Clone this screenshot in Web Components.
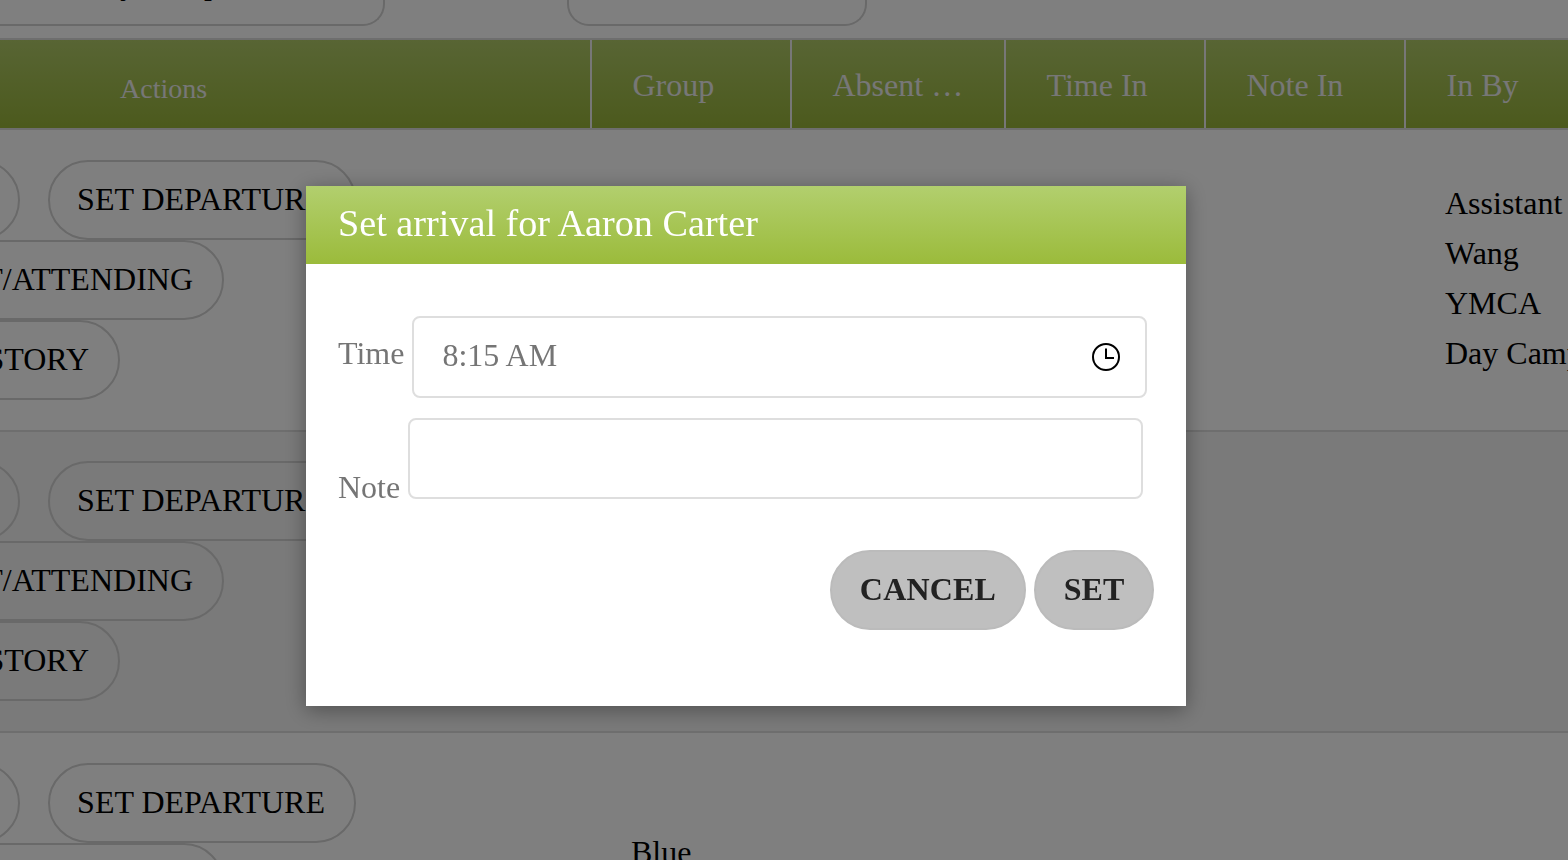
<!DOCTYPE html>
<html>
<head>
<meta charset="utf-8">
<title>Attendance</title>
<style>
html, body { margin: 0; height: 100%; overflow: hidden; background: #fff; }
body { font: 32px "Liberation Serif", "Times New Roman", serif; color: #000; }
</style>
</head>
<body>
<attendance-page></attendance-page>

<script>
const pillTemplate = document.createElement('template');
pillTemplate.innerHTML = `
<style>
:host {
  display: flex;
  justify-content: flex-end;
  align-items: center;
  box-sizing: border-box;
  height: 80px;
  padding: 0 29px 2px 0;
  border: 2px solid #d2d2d2;
  border-radius: 40px;
  white-space: nowrap;
  overflow: hidden;
}
</style>
<slot></slot>
`;
class PillButton extends HTMLElement {
  constructor() {
    super();
    this.attachShadow({ mode: 'open' }).appendChild(pillTemplate.content.cloneNode(true));
  }
}
customElements.define('pill-button', PillButton);

const headTemplate = document.createElement('template');
headTemplate.innerHTML = `
<style>
:host {
  display: grid;
  grid-template-columns: 870px 198px 212px 198px 198px 1fr;
  column-gap: 2px;
  box-sizing: border-box;
  height: 92px;
  border-top: 2px solid #dcdcdc;
  border-bottom: 2px solid #dcdcdc;
  background: linear-gradient(#b0ca68, #98b43a);
  color: #eeeeee;
}
.cell {
  box-shadow: 2px 0 0 #efefef;
  padding: 27px 0 0 40.5px;
  line-height: 36px;
  white-space: nowrap;
}
.actions {
  font-size: 28px;
  padding: 31px 0 0 400px;
}
</style>
<div class="cell actions">Actions</div>
<div class="cell">Group</div>
<div class="cell">Absent …</div>
<div class="cell">Time In</div>
<div class="cell">Note In</div>
<div class="cell">In By</div>
`;
class TableHead extends HTMLElement {
  constructor() {
    super();
    this.attachShadow({ mode: 'open' }).appendChild(headTemplate.content.cloneNode(true));
  }
}
customElements.define('table-head', TableHead);

const rowTemplate = document.createElement('template');
rowTemplate.innerHTML = `
<style>
:host {
  display: grid;
  grid-template-columns: 872px 200px 214px 200px 200px 1fr;
  box-sizing: border-box;
  height: 301.5px;
  border-bottom: 2px solid #dcdcdc;
}
:host([alt]) { background: #f4f4f4; }
.actions {
  display: flex;
  flex-direction: column;
  padding-top: 30px;
}
:host([alt]) .actions { padding-top: 29.5px; }
.group { padding: 94px 0 0 39px; line-height: 50px; }
.inby { padding: 48px 0 0 39px; line-height: 50px; white-space: nowrap; }
.spacer { grid-column: span 3; }
</style>
<div class="actions"><slot name="actions"></slot></div>
<div class="group"><slot name="group"></slot></div>
<div class="spacer"></div>
<div class="inby"><slot name="inby"></slot></div>
`;
class TableRow extends HTMLElement {
  constructor() {
    super();
    this.attachShadow({ mode: 'open' }).appendChild(rowTemplate.content.cloneNode(true));
  }
}
customElements.define('table-row', TableRow);

const actionsTemplate = document.createElement('template');
actionsTemplate.innerHTML = `
<style>
:host { display: block; }
.line { display: flex; gap: 28px; }
.arrive { width: 300px; }
.depart { width: 308px; }
.absent { width: 504px; }
.history { width: 400px; }
</style>
<div class="line">
  <pill-button class="arrive">SET ARRIVAL</pill-button>
  <pill-button class="depart">SET DEPARTURE</pill-button>
</div>
<div class="line"><pill-button class="absent">SET ABSENT/ATTENDING</pill-button></div>
<div class="line"><pill-button class="history">VIEW HISTORY</pill-button></div>
`;
class RowActions extends HTMLElement {
  constructor() {
    super();
    this.attachShadow({ mode: 'open' }).appendChild(actionsTemplate.content.cloneNode(true));
  }
}
customElements.define('row-actions', RowActions);

const dialogTemplate = document.createElement('template');
dialogTemplate.innerHTML = `
<style>
:host {
  position: fixed;
  inset: 0;
  display: block;
  background: rgba(0,0,0,.5);
}
.dialog {
  position: absolute;
  left: 306px;
  top: 186px;
  width: 880px;
  height: 520px;
  background: #fff;
  box-shadow: 0 4px 20px rgba(0,0,0,.35);
}
.title {
  height: 78px;
  box-sizing: border-box;
  padding: 15px 32px 0;
  background: linear-gradient(#b2cf6e, #9bbb3b);
  color: #fff;
  font-size: 38.2px;
  line-height: 44px;
}
.body { padding: 52px 32px 0; }
.row { display: flex; gap: 8px; color: #757575; }
.row.time { align-items: center; }
.row.note { align-items: flex-end; margin-top: 20px; }
.row.time label { padding-bottom: 8px; }
.field {
  box-sizing: border-box;
  width: 735px;
  border: 2px solid #dedede;
  border-radius: 8px;
  display: flex;
  align-items: center;
  justify-content: space-between;
  padding: 0 25px 0 28px;
}
.time .field { height: 82px; }
.time .field span { margin-bottom: 4px; }
.note .field { height: 81px; }
.note label { line-height: 36px; margin-bottom: -6px; }
svg { display: block; }
.buttons { display: flex; justify-content: flex-end; gap: 8px; margin-top: 51px; }
.btn {
  box-sizing: border-box;
  height: 80px;
  padding-bottom: 2px;
  border: 2px solid #bbb;
  border-radius: 40px;
  background: #bfbfbf;
  color: #222;
  font-weight: bold;
  display: flex;
  align-items: center;
  justify-content: center;
}
.cancel { width: 196px; letter-spacing: .2px; }
.set { width: 120px; }
</style>
<div class="dialog" role="dialog">
  <div class="title"><slot name="title"></slot></div>
  <div class="body">
    <div class="row time">
      <label>Time</label>
      <div class="field">
        <span>8:15 AM</span>
        <svg width="28" height="28" viewBox="0 0 28 28" fill="none" stroke="#000" stroke-width="2">
          <circle cx="14" cy="14" r="13"/>
          <path d="M14 5.5V15H22"/>
        </svg>
      </div>
    </div>
    <div class="row note">
      <label>Note</label>
      <div class="field"></div>
    </div>
    <div class="buttons">
      <div class="btn cancel">CANCEL</div>
      <div class="btn set">SET</div>
    </div>
  </div>
</div>
`;
class ArrivalDialog extends HTMLElement {
  constructor() {
    super();
    this.attachShadow({ mode: 'open' }).appendChild(dialogTemplate.content.cloneNode(true));
  }
}
customElements.define('arrival-dialog', ArrivalDialog);

const pageTemplate = document.createElement('template');
pageTemplate.innerHTML = `
<style>
:host { display: block; }
.filters {
  display: flex;
  height: 38px;
  align-items: flex-end;
}
.filter {
  box-sizing: border-box;
  height: 60px;
  margin-bottom: 12px;
  flex: none;
  border: 2px solid #d2d2d2;
  border-radius: 0 0 22px 22px;
  border-top: 0;
  overflow: hidden;
  display: flex;
  align-items: flex-end;
}
.search { width: 385px; border-left: 0; border-bottom-left-radius: 0; }
.search span { padding: 0 0 22px 81px; white-space: nowrap; word-spacing: -6px; }
.date { width: 300px; margin-left: 182px; }
.table { margin-left: -280px; width: 1900px; }
</style>
<div class="filters">
  <div class="filter search"><span>Any Group</span></div>
  <div class="filter date"></div>
</div>
<div class="table">
  <table-head></table-head>
  <table-row>
    <row-actions slot="actions"></row-actions>
    <div slot="inby">Assistant<br>Wang<br>YMCA<br>Day Camp</div>
  </table-row>
  <table-row alt>
    <row-actions slot="actions"></row-actions>
  </table-row>
  <table-row>
    <row-actions slot="actions"></row-actions>
    <div slot="group">Blue</div>
  </table-row>
</div>
<arrival-dialog><span slot="title">Set arrival for Aaron Carter</span></arrival-dialog>
`;
class AttendancePage extends HTMLElement {
  constructor() {
    super();
    this.attachShadow({ mode: 'open' }).appendChild(pageTemplate.content.cloneNode(true));
  }
}
customElements.define('attendance-page', AttendancePage);
</script>
</body>
</html>
